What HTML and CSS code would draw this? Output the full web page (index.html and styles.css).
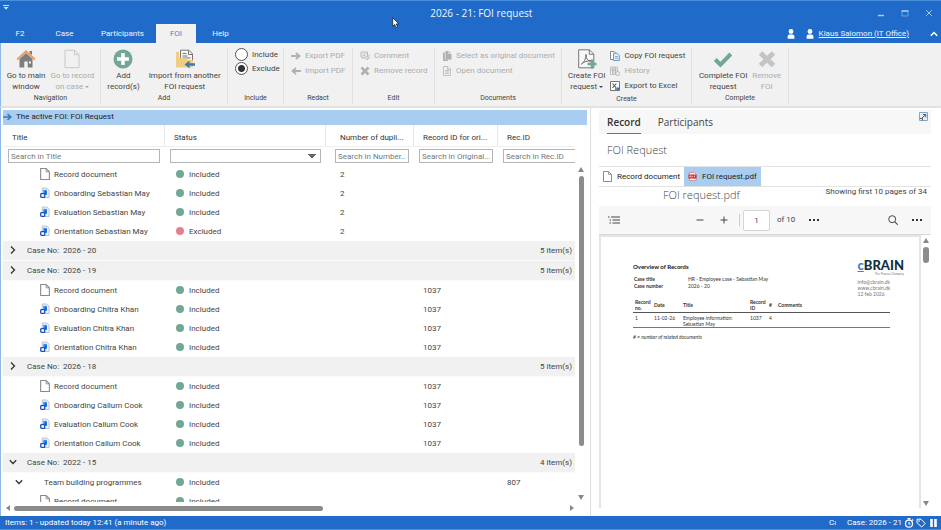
FILE: index.html
```html
<!DOCTYPE html>
<html lang="en">
<head>
<meta charset="utf-8">
<title>2026 - 21: FOI request</title>
<link rel="stylesheet" href="styles.css">
</head>
<body>
<svg class="defs" aria-hidden="true">
  <symbol id="page" viewBox="0 0 9 11"><path d="M.5.5h5l3 3v7h-8z" fill="#fff" stroke="#8a8a8a"/><path d="M5.500.5v3h3" fill="none" stroke="#8a8a8a" stroke-width=".8"/></symbol>
  <symbol id="rec" viewBox="0 0 11 12"><path d="M2.500.5h5l2.500 2.500v8H2.500z" fill="#eef2f8" stroke="#b4bccb"/><path d="M3.500 2.500h4v5h-4z" fill="#3fa3f5"/><path d="M5 3.500h2.500V8H5z" fill="#1267d8"/><rect x=".8" y="6.800" width="4.400" height="4" rx=".8" fill="#fff" stroke="#1550c0" stroke-width="1.400"/></symbol>
  <symbol id="right" viewBox="0 0 8 10"><path d="M2 1.500 5.500 5 2 8.500" fill="none" stroke="#333" stroke-width="1.300"/></symbol>
  <symbol id="down" viewBox="0 0 8 10"><path d="M.8 3.200 4 6.500l3.200-3.300" fill="none" stroke="#333" stroke-width="1.300"/></symbol>
  <symbol id="person" viewBox="0 0 8 10"><circle cx="4" cy="2.500" r="2.400" fill="#fff"/><path d="M.6 9.800V7.500q0-2 2-2h2.800q2 0 2 2v2.300z" fill="#fff"/></symbol>
</svg>
<div class="window">
  <header class="titlebar">
    <svg class="quick" viewBox="0 0 6 5"><path d="M0 .5h6" stroke="#cfe2fa"/><path d="M.5 2h5L3 4.800z" fill="#cfe2fa"/></svg>
    <h1 class="title">2026 - 21: FOI request</h1>
    <div class="winbuttons">
      <button aria-label="Minimize"><svg viewBox="0 0 8 8"><path d="M1 6.500h6" stroke="#a9cbf3" stroke-width="1.500"/></svg></button>
      <button aria-label="Maximize"><svg viewBox="0 0 8 8"><path d="M1 2h6v5H1z" fill="none" stroke="#7fb0ec" stroke-width=".8"/><path d="M.6 2h6.800" stroke="#a9cbf3" stroke-width="1.500"/></svg></button>
      <button aria-label="Close"><svg viewBox="0 0 8 8"><path d="m1.200 1.200 5.600 5.600m0-5.600L1.200 6.800" stroke="#a9cbf3"/></svg></button>
    </div>
    <nav class="tabs">
      <a href="#f2">F2</a><a href="#case">Case</a><a href="#participants" class="wide">Participants</a><a href="#foi" class="active">FOI</a><a href="#help">Help</a>
    </nav>
    <div class="user">
      <svg viewBox="0 0 8 10"><use href="#person"/></svg>
      <svg viewBox="0 0 8 10"><use href="#person"/></svg>
      <a href="#user">Klaus Salomon (IT Office)</a>
      <button aria-label="Collapse ribbon"><svg viewBox="0 0 8 8"><path d="M.8 5.800 4 2.500l3.200 3.300" fill="none" stroke="#fff" stroke-width="1.500"/></svg></button>
    </div>
  </header>

  <section class="ribbon">
    <div class="group"><div class="tools">
      <button class="big"><svg viewBox="0 0 20 20"><path d="M3.500 10v8.500h4.800v-6h3.400v6h4.800V10L10 4z" fill="#7d7d7d"/><path d="M13 12.500h2v2h-2z" fill="#f1f1f1"/><path d="M13.500 2h2.500v4l-2.500-2z" fill="#7d7d7d"/><path d="M1.200 10.500 10 2.200l8.800 8.300" fill="none" stroke="#ee9a5c" stroke-width="1.900"/></svg><span>Go to main<br>window</span></button>
      <button class="big" disabled><svg viewBox="0 0 20 20"><path d="M3 1.200h9.500l4.500 4.500v13H3z" fill="#f1f1f1" stroke="#c8c8c8"/><path d="M12.500 1.200v4.500H17" fill="none" stroke="#c8c8c8"/></svg><span>Go to record<br>on case <i class="caret"></i></span></button>
    </div><h2>Navigation</h2></div>
    <div class="group"><div class="tools spaced">
      <button class="big"><svg viewBox="0 0 20 20"><circle cx="10" cy="10" r="9.500" fill="#71a794"/><path d="M10 4v12M4 10h12" stroke="#fff" stroke-width="3.600"/></svg><span>Add<br>record(s)</span></button>
      <button class="big"><svg viewBox="0 0 20 20"><path d="M5.500 10V1.200H14L17.500 5v7" fill="#f7f7f7" stroke="#777"/><path d="M13.500 1.500v4h4M7.500 4.500h4m-4 2.500h5m-5 2h8" fill="none" stroke="#777"/><path d="M1 18.500V3h3v6h7l1.500 2H18v7.500z" fill="#f1cc83"/><path d="m9.500 15.500 5-4v2.800H20v2.400h-5.500v2.800z" fill="#3c7ab5"/></svg><span>Import from another<br>FOI request</span></button>
    </div><h2>Add</h2></div>
    <div class="group"><div class="tools radios">
      <label><input type="radio" name="inc">Include</label>
      <label><input type="radio" name="inc" checked>Exclude</label>
    </div><h2>Include</h2></div>
    <div class="group"><div class="tools stack">
      <button disabled><svg viewBox="0 0 10 10"><path d="M0 5h8M5 1.800 8.500 5 5 8.200" fill="none" stroke="#b0b0b0" stroke-width="1.800"/></svg>Export PDF</button>
      <button disabled><svg viewBox="0 0 10 10"><path d="M10 5H2m3-3.200L1.500 5 5 8.200" fill="none" stroke="#b0b0b0" stroke-width="1.800"/></svg>Import PDF</button>
    </div><h2>Redact</h2></div>
    <div class="group"><div class="tools stack">
      <button disabled><svg viewBox="0 0 10 10"><path d="M1 1h6.500v5H4L2.500 7.500V6H1z" fill="none" stroke="#bcbcbc"/><path d="M2.500 3h4m-4 1.500h3" stroke="#bcbcbc" stroke-width=".8"/><path d="M9 3.500v4H7.500v1.500L6 7.500H4.500" fill="none" stroke="#bcbcbc" stroke-width=".9"/></svg>Comment</button>
      <button disabled><svg viewBox="0 0 10 10"><path d="m1.500 1.500 7 7m0-7-7 7" stroke="#b0b0b0" stroke-width="2.600"/></svg>Remove record</button>
    </div><h2>Edit</h2></div>
    <div class="group"><div class="tools stack">
      <button disabled><svg viewBox="0 0 10 10"><path d="M1 1.500h1.800v7H6V10H1z" fill="#b0b0b0"/><path d="M3.500 0h3v3h3v5.500h-6z" fill="#b0b0b0"/><path d="M7.200 0 9.500 2.300H7.200z" fill="#c4c4c4"/></svg>Select as original document</button>
      <button disabled><svg viewBox="0 0 10 10"><path d="M1.500.5H6L8.500 3v6.500h-7zM3 4.500h4M3 6h4M3 7.500h4M5.500.5v3h3" fill="none" stroke="#bcbcbc" stroke-width=".9"/></svg>Open document</button>
    </div><h2>Documents</h2></div>
    <div class="group"><div class="tools create">
      <button class="big"><svg viewBox="0 0 20 20"><path d="M1.700.8h10.800l4.300 4.300v13.700H1.700z" fill="#f8f8f8" stroke="#777"/><path d="M12.300.8v4.500h4.500" fill="none" stroke="#777"/><path d="M4.500 15c2-1 4.500-5 4.500-9.500 0 5 2.500 6.500 5 6.500-4-.5-7 .8-9.500 3z" fill="none" stroke="#666"/><path d="M15 10.500v9M10.500 15h9" stroke="#71a794" stroke-width="2.600"/></svg><span>Create FOI<br>request <i class="caret"></i></span></button>
      <div class="stack">
        <button><svg viewBox="0 0 10 10"><path d="M.5.5H4l1.500 1.500v6.500h-5z" fill="#fff" stroke="#888"/><path d="M3.500 2.200H7l2.300 2.300v5h-5.800z" fill="#e4eefa" stroke="#6c9aca"/><path d="M5 5.500h3M5 7.300h3" stroke="#6c9aca" stroke-width=".8"/></svg>Copy FOI request</button>
        <button disabled><svg viewBox="0 0 10 10"><path d="M.5 1h2v7.500h-2zM3 1h2v7.500H3zM5.500 1h2v7.500h-2zM.5 4h7" fill="none" stroke="#b5b5b5" stroke-width=".8"/><circle cx="7.700" cy="7.500" r="2" fill="#f1f1f1" stroke="#aaa" stroke-width=".8"/></svg>History</button>
        <button><svg viewBox="0 0 10 10"><path d="M.5.5h9v9h-9z" fill="#fff" stroke="#777"/><path d="m2.500 2.500 3.800 4.500m0-4.500L2.500 7" stroke="#555" stroke-width="1.100"/><path d="M5 7.200h2.500V5.500L10 8l-2.500 2V8.700H5z" fill="#2d6fc0"/></svg>Export to Excel</button>
      </div>
    </div><h2>Create</h2></div>
    <div class="group"><div class="tools">
      <button class="big"><svg viewBox="0 0 20 20"><path d="m2.200 10.500 5.300 5.200L17.800 5" fill="none" stroke="#71a794" stroke-width="4"/></svg><span>Complete FOI<br>request</span></button>
      <button class="big" disabled><svg viewBox="0 0 20 20"><path d="m3.500 4 13 12.500m0-12.500-13 12.500" stroke="#c4c4c4" stroke-width="5"/></svg><span>Remove<br>FOI</span></button>
    </div><h2>Complete</h2></div>
  </section>

  <main class="content">
    <section class="list">
      <div class="active-foi"><svg viewBox="0 0 9 8"><path d="M0 4h7M4.500 1 7.700 4 4.500 7" fill="none" stroke="#3c7ab5" stroke-width="1.700"/></svg>The active FOI: FOI Request</div>
      <div class="listbody">
        <div class="scrollarea">
          <table>
            <colgroup><col><col class="c-status"><col class="c-dup"><col class="c-orig"><col class="c-rec"></colgroup>
            <thead>
              <tr class="heads"><th>Title</th><th>Status</th><th class="dup">Number of dupli...</th><th>Record ID for ori...</th><th>Rec.ID</th></tr>
              <tr class="filters">
                <td><input type="text" placeholder="Search in Title" aria-label="Search in Title"></td>
                <td><select aria-label="Status"><option></option><option>Included</option><option>Excluded</option></select></td>
                <td class="dup"><input type="text" placeholder="Search in Number..." aria-label="Search in Number"></td>
                <td><input type="text" placeholder="Search in Original..." aria-label="Search in Original"></td>
                <td class="last"><input type="text" placeholder="Search in Rec.ID" aria-label="Search in Rec.ID"></td>
              </tr>
            </thead>
            <tbody>
              <tr><td class="name"><svg><use href="#page"/></svg>Record document</td><td class="in">Included</td><td class="dup">2</td><td></td><td></td></tr>
              <tr><td class="name"><svg><use href="#rec"/></svg>Onboarding Sebastian May</td><td class="in">Included</td><td class="dup">2</td><td></td><td></td></tr>
              <tr><td class="name"><svg><use href="#rec"/></svg>Evaluation Sebastian May</td><td class="in">Included</td><td class="dup">2</td><td></td><td></td></tr>
              <tr><td class="name"><svg><use href="#rec"/></svg>Orientation Sebastian May</td><td class="in ex">Excluded</td><td class="dup">2</td><td></td><td></td></tr>
              <tr class="case"><td colspan="4"><svg><use href="#right"/></svg>Case No:&nbsp; 2026 - 20</td><td>5 item(s)</td></tr>
              <tr class="case"><td colspan="4"><svg><use href="#right"/></svg>Case No:&nbsp; 2026 - 19</td><td>5 item(s)</td></tr>
              <tr><td class="name"><svg><use href="#page"/></svg>Record document</td><td class="in">Included</td><td></td><td>1037</td><td></td></tr>
              <tr><td class="name"><svg><use href="#rec"/></svg>Onboarding Chitra Khan</td><td class="in">Included</td><td></td><td>1037</td><td></td></tr>
              <tr><td class="name"><svg><use href="#rec"/></svg>Evaluation Chitra Khan</td><td class="in">Included</td><td></td><td>1037</td><td></td></tr>
              <tr><td class="name"><svg><use href="#rec"/></svg>Orientation Chitra Khan</td><td class="in">Included</td><td></td><td>1037</td><td></td></tr>
              <tr class="case"><td colspan="4"><svg><use href="#right"/></svg>Case No:&nbsp; 2026 - 18</td><td>5 item(s)</td></tr>
              <tr><td class="name"><svg><use href="#page"/></svg>Record document</td><td class="in">Included</td><td></td><td>1037</td><td></td></tr>
              <tr><td class="name"><svg><use href="#rec"/></svg>Onboarding Callum Cook</td><td class="in">Included</td><td></td><td>1037</td><td></td></tr>
              <tr><td class="name"><svg><use href="#rec"/></svg>Evaluation Callum Cook</td><td class="in">Included</td><td></td><td>1037</td><td></td></tr>
              <tr><td class="name"><svg><use href="#rec"/></svg>Orientation Callum Cook</td><td class="in">Included</td><td></td><td>1037</td><td></td></tr>
              <tr class="case"><td colspan="4"><svg><use href="#down"/></svg>Case No:&nbsp; 2022 - 15</td><td>4 item(s)</td></tr>
              <tr><td class="parent"><svg><use href="#down"/></svg>Team building programmes</td><td class="in">Included</td><td></td><td></td><td>807</td></tr>
              <tr><td class="name"><svg><use href="#page"/></svg>Record document</td><td class="in">Included</td><td></td><td></td><td></td></tr>
            </tbody>
          </table>
        </div>
        <div class="vscroll"><i class="up"></i><span class="thumb"></span><i class="down"></i></div>
      </div>
      <div class="hscroll"><i class="left"></i><span class="track"><span class="thumb"></span></span><i class="right"></i></div>
    </section>

    <section class="preview">
      <div class="ptabs">
        <a href="#record" class="active">Record</a><a href="#rec-participants">Participants</a>
        <button aria-label="Open in new window"><svg viewBox="0 0 9 9"><path d="M.5.500h8v8h-8z" fill="#e6f0fa" stroke="#7fa6cf"/><path d="M4 2.500h2.800v2.800M6.500 2.800 3 6M1 6.500h2.500v2" fill="none" stroke="#555"/></svg></button>
      </div>
      <h2 class="subject">FOI Request</h2>
      <div class="docs">
        <button><svg viewBox="0 0 9 11"><use href="#page"/></svg>Record document</button>
        <button class="selected"><svg viewBox="0 0 10 10"><path d="M1.500.5H7L9 2.500v7H1.500z" fill="#f4f4f4" stroke="#b99"/><path d="M.5 2.800h9v4.500h-9z" fill="#e0252b"/><path d="M2 6V4.200h1v.8H2m2.300 1V4.200q1.500.9 0 1.800M7 6V4.200h1M7 5h.8" fill="none" stroke="#fff" stroke-width=".6"/></svg>FOI request.pdf</button>
      </div>
      <div class="docname"><h3>FOI request.pdf</h3><span>Showing first 10 pages of 34</span></div>
      <div class="pdfbar">
        <button aria-label="Contents"><svg viewBox="0 0 12 8"><path d="M0 1h1.500M3 1h9M1.500 4H3m1.500 0H12M1.500 7H3m1.500 0H12" stroke="#444"/></svg></button>
        <div class="pager">
          <button aria-label="Zoom out"><svg viewBox="0 0 8 8"><path d="M.5 4h7" stroke="#444"/></svg></button>
          <button aria-label="Zoom in"><svg viewBox="0 0 8 8"><path d="M.5 4h7M4 .5v7" stroke="#444"/></svg></button>
          <div class="goto"><input type="text" value="1" aria-label="Page"></div>
          <span class="of">of 10</span>
          <button aria-label="More"><svg viewBox="0 0 10 8"><path d="M0 4h2m2 0h2m2 0h2" stroke="#333" stroke-width="2"/></svg></button>
        </div>
        <button aria-label="Search"><svg viewBox="0 0 10 10"><circle cx="4.200" cy="4.200" r="3.500" fill="none" stroke="#444"/><path d="M6.800 6.800 9.700 9.700" stroke="#444" stroke-width="1.100"/></svg></button>
        <button aria-label="Settings"><svg viewBox="0 0 10 8"><path d="M0 4h2m2 0h2m2 0h2" stroke="#333" stroke-width="2"/></svg></button>
      </div>
      <div class="viewer">
        <article class="sheet">
          <div class="sheet-top">
            <div>
              <h4>Overview of Records</h4>
              <dl><dt>Case title</dt><dd>HR - Employee case - Sebastian May</dd><dt>Case number</dt><dd>2026 - 20</dd></dl>
            </div>
            <div class="company">
              <p class="logo"><span>c</span>BRAIN</p>
              <p class="slogan">The Process Company</p>
              <address>info@cbrain.dk<br>www.cbrain.dk<br>12 feb 2026</address>
            </div>
          </div>
          <table class="records">
            <colgroup><col class="r-no"><col class="r-date"><col class="r-title"><col class="r-id"><col class="r-n"><col></colgroup>
            <thead><tr><th>Record<br>no.</th><th>Date</th><th>Title</th><th>Record<br>ID</th><th>#</th><th>Comments</th></tr></thead>
            <tbody><tr><td>1</td><td>11-02-26</td><td>Employee information:<br>Sebastian May</td><td>1037</td><td>4</td><td></td></tr></tbody>
          </table>
          <p class="note"># = number of related documents</p>
        </article>
        <div class="vscroll"><i class="up"></i><span class="thumb"></span><i class="down"></i></div>
      </div>
    </section>
  </main>

  <footer class="status">
    <span class="grow">Items: 1 - updated today 12:41 (a minute ago)</span>
    <span class="cut">Case</span>
    <span>Case: 2026 - 21</span>
    <svg viewBox="0 0 10 10"><circle cx="5" cy="5.700" r="3.500" fill="none" stroke="#fff" stroke-width="1.200"/><path d="M3.500.6h3M5 .6v1.500M5 4v2h1.500M8 1.500l1.200 1.200" stroke="#fff" stroke-width="1.100" fill="none"/></svg>
    <svg viewBox="0 0 10 10"><path d="M1 1.200h4l4.200 4.300L5.700 9 1 4.800z" fill="none" stroke="#fff"/><circle cx="3" cy="3.100" r=".8" fill="#fff"/></svg>
    <svg viewBox="0 0 10 10"><path d="M3.500 1v8M7.500 1v8" stroke="#fff" stroke-width="2.600"/></svg>
  </footer>
</div>
<svg class="cursor" viewBox="0 0 8 12"><path d="M.7.7v8.600l2-1.900 1.400 3.300 1.500-.7-1.400-3.100h2.700z" fill="#fff" stroke="#222" stroke-width=".8"/></svg>
</body>
</html>
```
FILE: styles.css
```css
* { box-sizing: border-box; }
html, body { height: 100%; }
body {
  margin: 0;
  overflow: hidden;
  font: 8px/10px Roboto, "Open Sans", sans-serif;
  color: #444;
  background: #fff;
}
h1, h2, h3, h4, p, dl, dd { margin: 0; font-weight: 400; }
button, input, select { font: inherit; color: inherit; }
button { border: 0; padding: 0; background: none; }
a { color: inherit; text-decoration: none; }
svg { display: block; flex: none; }
.defs { position: absolute; width: 0; height: 0; }
.cursor { position: absolute; left: 392px; top: 17px; width: 8px; height: 12px; }

.window {
  height: 100%;
  display: flex;
  flex-direction: column;
}

/* Title bar */
.titlebar {
  height: 43px;
  display: grid;
  grid-template-columns: 16px 1fr auto;
  grid-template-rows: 23px 19px;
  background: #206bca;
  color: #eef5fd;
  border-top: 1px solid #4a8fdb;
}
.quick { width: 6px; height: 5px; margin: 4px 0 0 3px; }
.title { font: 10px/24px "Open Sans", sans-serif; text-align: center; padding-left: 160px; }
.winbuttons { display: flex; gap: 16px; align-items: center; justify-content: flex-end; padding-right: 8px; }
.winbuttons svg { width: 8px; height: 8px; }
.tabs { grid-column: 1 / 3; display: flex; }
.tabs a { width: 49px; line-height: 19px; text-align: center; }
.tabs a:first-child { width: 40px; }
.tabs .wide { width: 67px; }
.tabs .active { width: 40px; background: #f1f1f1; color: #4a86cf; }
.user { display: flex; align-items: center; gap: 5px; padding-right: 3px; }
.user svg { width: 8px; height: 10px; }
.user > svg:first-child { margin-right: 6px; }
.user a { text-decoration: underline; }
.user button { margin-left: 16px; }
.user button svg { width: 8px; height: 8px; }

/* Ribbon */
.ribbon {
  height: 65px;
  flex: none;
  display: grid;
  grid-template-columns: 100px 127px 56px 69px 82px 127px 130px 97px;
  padding-top: 5px;
  background: #f1f1f1;
  border-left: 1px solid #8db9ec;
  border-bottom: 2px solid #e2e2e2;
}
.group {
  height: 56px;
  display: flex;
  flex-direction: column;
  border-right: 1px solid #e0e0e0;
  white-space: nowrap;
}
.group h2 { font-size: 7px; line-height: 12px; text-align: center; }
.tools { height: 46px; display: flex; justify-content: center; gap: 5px; }
.tools button:disabled { color: #ababab; }
.spaced { gap: 9px; }
.big { display: flex; flex-direction: column; align-items: center; gap: 1px; padding-top: 1px; line-height: 11px; }
.big svg { width: 20px; height: 20px; }
.stack { display: flex; flex-direction: column; justify-content: flex-start; gap: 0; }
.tools.stack { padding-left: 7px; }
.stack button { display: flex; align-items: center; gap: 4px; height: 15px; }
.stack svg { width: 10px; height: 10px; }
.create { justify-content: flex-start; padding-left: 6px; }
.radios { flex-direction: column; justify-content: flex-start; gap: 1px; padding-left: 7px; }
.radios label { display: flex; align-items: center; gap: 4px; height: 13px; }
.radios input {
  appearance: none;
  width: 13px;
  height: 13px;
  margin: 0;
  border: 1px solid #555;
  border-radius: 50%;
  background: #fff;
}
.radios input:checked { background: radial-gradient(circle, #333 3px, #fff 4px); }
.caret { display: inline-block; border: 2px solid transparent; border-top-color: currentColor; border-bottom: 0; vertical-align: middle; }

/* Content */
.content {
  flex: 1;
  min-height: 0;
  display: grid;
  grid-template-columns: minmax(0, 590fr) minmax(0, 350fr);
  border-left: 1px solid #8db9ec;
}
.list {
  min-height: 0;
  display: flex;
  flex-direction: column;
  padding: 2px 3px 2px 2px;
  border-right: 1px solid #dedede;
}
.active-foi {
  height: 15px;
  flex: none;
  display: flex;
  align-items: center;
  gap: 4px;
  padding-bottom: 1px;
  background: #a8cdf0;
  color: #222;
}
.active-foi svg { width: 9px; height: 8px; }
.listbody { flex: 1; min-height: 0; display: flex; }
.scrollarea { flex: 1; min-width: 0; overflow: hidden; }
.scrollarea table { width: 100%; table-layout: fixed; border-collapse: separate; border-spacing: 0; }
.c-status { width: 161px; }
.c-dup { width: 88px; }
.c-orig { width: 84px; }
.c-rec { width: 77px; }
.scrollarea td, .scrollarea th { padding: 0 0 0 9px; text-align: left; font-weight: 400; white-space: nowrap; }
.scrollarea .dup { padding-left: 14px; }
.heads th { height: 22px; border-right: 1px solid #e8e8e8; border-bottom: 1px solid #eee; color: #333; }
.scrollarea .heads th { padding-top: 4px; }
.heads th:last-child { border-right: 0; }
.scrollarea .filters td { height: 18px; padding: 0 5px; }
.scrollarea .filters .dup { padding-left: 9px; }
.scrollarea .filters .last { padding-right: 0; }
.filters input, .filters select {
  display: block;
  width: 100%;
  height: 14px;
  padding: 0 2px;
  border: 1px solid #b5b5b5;
  border-radius: 0;
  background: #fff;
}
.filters .last input { border-right: 0; }
.filters input::placeholder { color: #777; opacity: 1; }
.filters select {
  appearance: none;
  background: conic-gradient(from 315deg at 50% 100%, #666 90deg, transparent 0) right 4px center / 8px 4px no-repeat;
}
tbody tr { height: 19px; }
.scrollarea td svg { display: inline-block; width: 10px; height: 12px; margin: -2px 4px -2px 0; vertical-align: middle; }
.scrollarea .name { padding-left: 37px; }
.scrollarea .parent { padding-left: 12px; }
.scrollarea .parent svg { width: 8px; height: 10px; margin-right: 21px; }
.in::before {
  content: "";
  display: inline-block;
  width: 8px;
  height: 8px;
  margin: 0 5px 0 2px;
  border-radius: 50%;
  background: #71a794;
  vertical-align: middle;
}
.ex::before { background: #e67f92; }
.case { height: 20px; }
.case td { background: #f1f1f1; border-bottom: 1px solid #fbfbfb; }
.scrollarea .case td:first-child { padding-left: 6px; }
.scrollarea .case td:last-child { padding-right: 3px; text-align: right; }
.scrollarea .case svg { width: 8px; height: 10px; margin-right: 10px; }

/* Scroll bars */
.vscroll { display: flex; flex-direction: column; align-items: center; gap: 4px; }
.vscroll i, .hscroll i { flex: none; border: 3px solid transparent; }
.vscroll .up { border-top: 0; border-bottom: 5px solid #888; }
.vscroll .down { border-bottom: 0; border-top: 5px solid #888; margin-top: auto; }
.thumb { display: block; background: #8b8b8b; border-radius: 3px; }
.list .vscroll { width: 12px; padding: 42px 0 2px; }
.list .vscroll .thumb { width: 5px; height: 81%; }
.hscroll { height: 12px; flex: none; display: flex; align-items: center; gap: 4px; padding: 0 13px 0 3px; }
.hscroll .left { border-left: 0; border-right: 4px solid #888; }
.hscroll .right { border-right: 0; border-left: 4px solid #888; }
.hscroll .track { flex: 1; }
.hscroll .thumb { width: 56%; height: 5px; }

/* Preview */
.preview { min-height: 0; display: flex; flex-direction: column; padding: 2px 10px 8px 8px; }
.ptabs { height: 24px; flex: none; display: flex; gap: 17px; padding: 0 3px 0 8px; background: #f7f7f7; font: 10px/24px "Open Sans", sans-serif; }
.ptabs .active { height: 24px; color: #333; font-weight: 600; border-bottom: 1px solid #2f7bd8; }
.ptabs button { margin-left: auto; align-self: flex-start; padding-top: 2px; }
.ptabs button svg { width: 9px; height: 9px; }
.subject { padding-left: 8px; font: 300 11px/32px "Open Sans", sans-serif; }
.docs { height: 21px; flex: none; display: flex; border-top: 1px solid #e2e2e2; border-bottom: 1px solid #e2e2e2; }
.docs button { display: flex; align-items: center; gap: 5px; padding: 0 4px; color: #222; }
.docs svg { width: 9px; height: 11px; }
.docs .selected { background: #a8cdf0; }
.docname { height: 19px; flex: none; display: flex; justify-content: space-between; padding: 0 4px 0 64px; }
.docname h3 { font: 300 11px/16px "Open Sans", sans-serif; }
.pdfbar { height: 29px; flex: none; display: flex; align-items: center; gap: 14px; padding: 0 9px; background: #f7f7f7; border-bottom: 1px solid #d8d8d8; }
.pdfbar svg { width: 10px; height: 10px; }
.pdfbar > button:first-child svg { width: 12px; height: 8px; }
.pager { flex: 1; display: flex; align-items: center; gap: 14px; padding-left: 61px; }
.pager svg { width: 10px; height: 8px; }
.goto { display: flex; align-items: center; margin: 0 -7px 0 -4px; }
.goto::before { content: ""; width: 1px; height: 12px; margin-right: 3px; background: #ccc; }
.goto input { width: 27px; height: 21px; padding: 0; text-align: center; border: 1px solid #d5d5d5; border-radius: 2px; background: #fff; }
.viewer { flex: 1; min-height: 0; display: flex; }
.sheet { flex: 1; min-width: 0; padding: 26px 15px 0 32px; border: 2px solid #e4e4e4; border-bottom: 0; font: 5px/6px Lato, sans-serif; color: #333; }
.viewer .vscroll { width: 10px; padding: 3px 0 2px; }
.viewer .vscroll .thumb { width: 6px; height: 16px; }
.sheet-top { display: flex; justify-content: space-between; }
.sheet h4 { font-size: 6px; line-height: 8px; font-weight: 700; color: #111; }
.sheet dl { display: grid; grid-template-columns: 54px auto; line-height: 7px; margin: 5px 0 0 1px; }
.sheet dt { font-weight: 700; }
.company { color: #777; margin-top: -4px; }
.logo { font: 900 13px/13px Lato, sans-serif; color: #12303f; text-align: right; }
.logo span { color: #3b83c0; text-decoration: underline; }
.slogan { font-size: 3px; line-height: 4px; text-align: right; }
.company address { font-style: normal; margin-top: 3px; }
.records { width: calc(100% - 14px); margin-top: 2px; table-layout: fixed; border-collapse: collapse; border-bottom: 1px solid #777; }
.records th, .records td { padding: 2px 0 0 2px; text-align: left; }
.records th { padding: 0 0 1px 2px; }
.records tr { height: auto; }
.records td { vertical-align: top; }
.records thead { border-bottom: 1px solid #555; }
.r-no { width: 19px; }
.r-date { width: 29px; }
.r-title { width: 67px; }
.r-id { width: 19px; }
.r-n { width: 9px; }
.note { margin-top: 6px; font-style: italic; }

/* Status bar */
.status { height: 14px; flex: none; display: flex; align-items: center; gap: 2px; padding: 0 3px 0 5px; background: #206bca; color: #fff; border-bottom: 1px solid #4a8fdb; }
.grow { flex: 1; }
.cut { width: 7px; overflow: hidden; margin-right: 9px; }
.status svg { width: 10px; height: 10px; }
```
